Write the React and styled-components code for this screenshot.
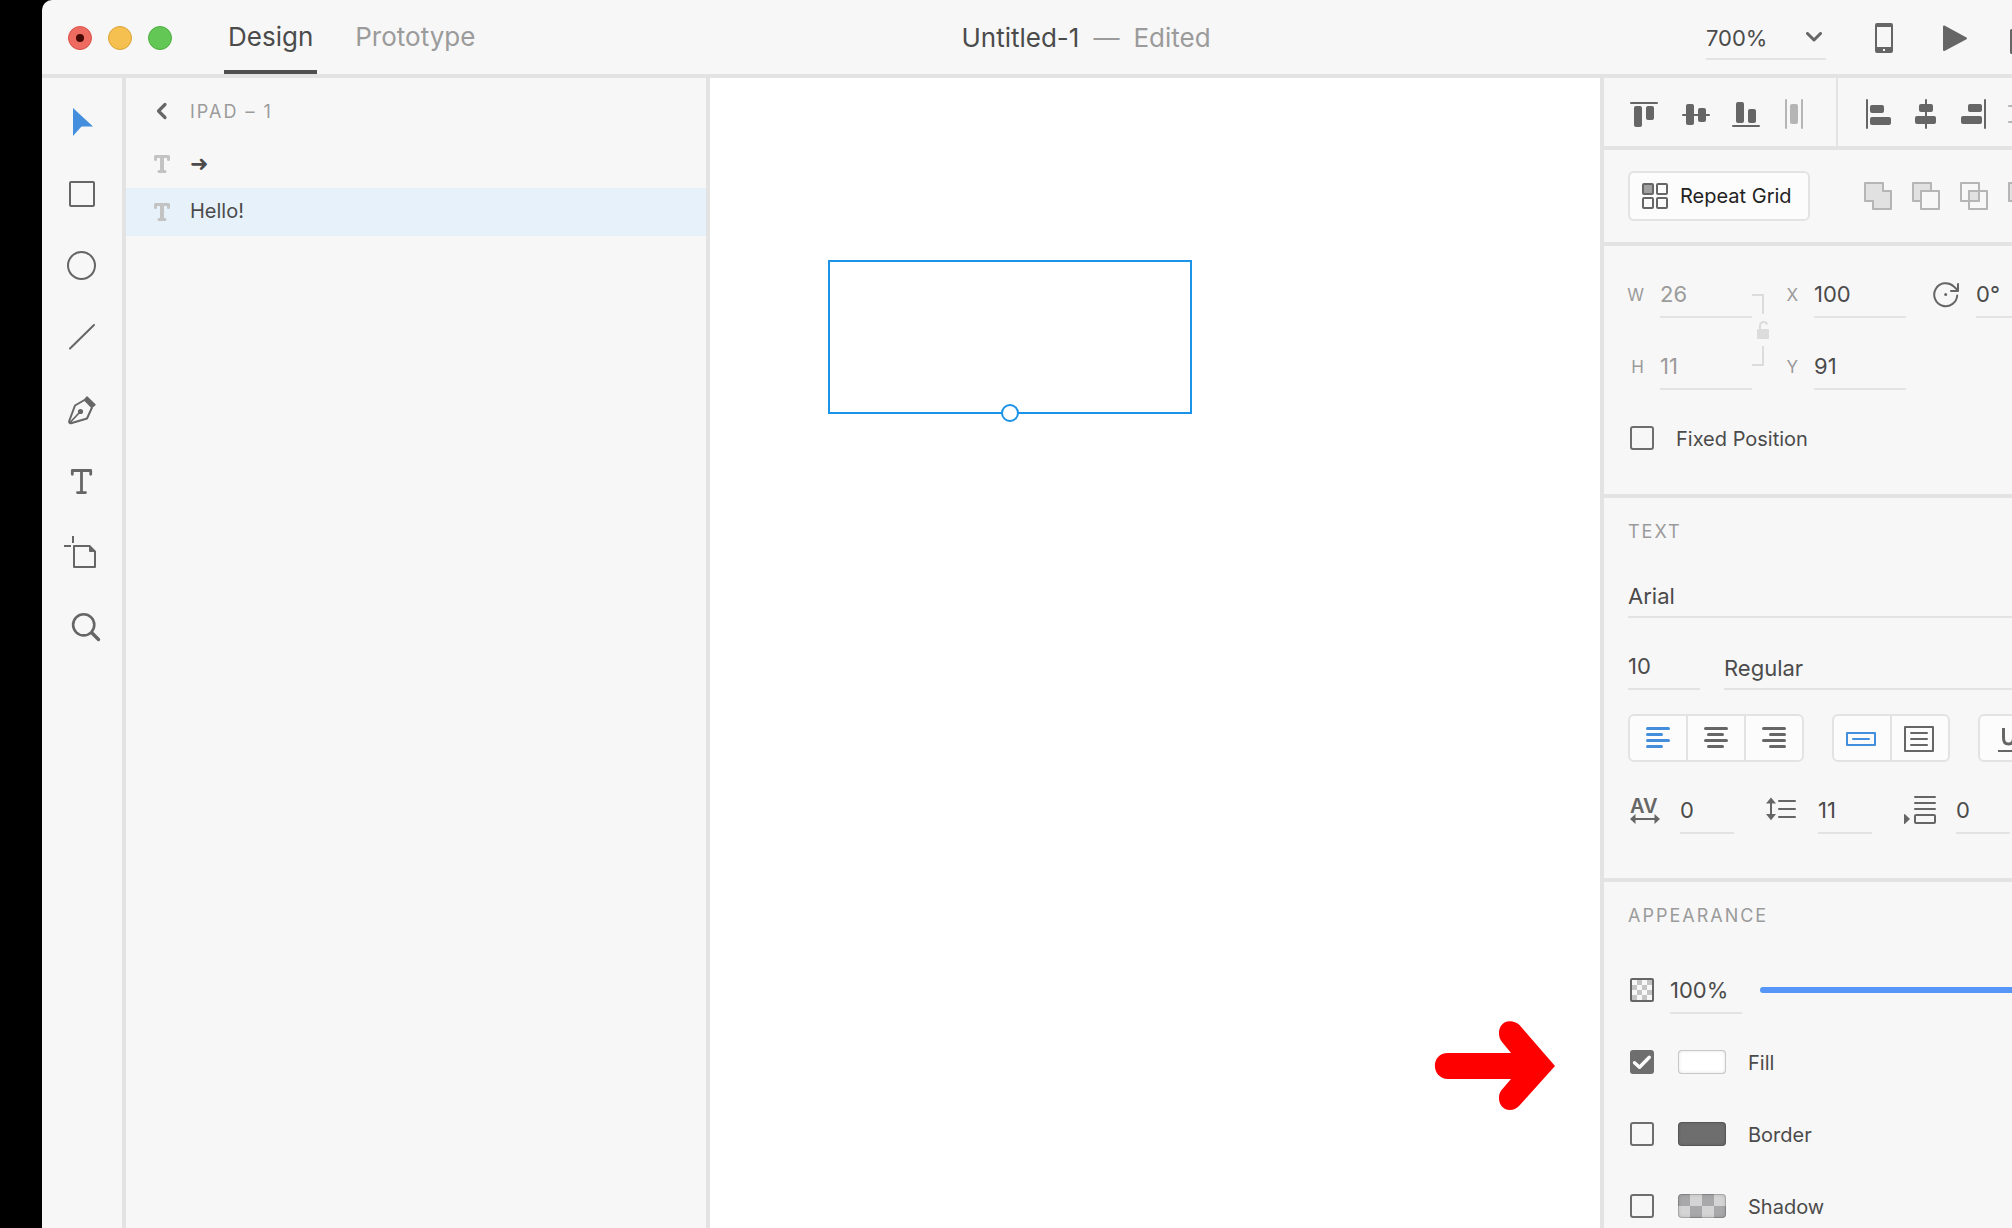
import React, { useState } from "react";
import styled, { createGlobalStyle, css } from "styled-components";

const c = {
  panel: "#f7f7f7",
  line: "#e3e3e3",
  text: "#4b4b4b",
  muted: "#9b9b9b",
  icon: "#666666",
  faint: "#b5b5b5",
  blue: "#448fdd",
  select: "#1a93e8",
};

const GlobalStyle = createGlobalStyle`
  *, *::before, *::after { box-sizing: border-box; }
  body { margin: 0; background: #000; }
  body, button, input, select {
    font-family: Inter, "Liberation Sans", sans-serif;
    color: ${c.text};
  }
  button { margin: 0; padding: 0; border: 0; background: none; cursor: pointer; }
  svg { display: block; flex: none; }
`;

/* ---------- window ---------- */

const Desktop = styled.div`
  height: 100vh;
  overflow: hidden;
  padding-left: 42px;
`;

const Window = styled.div`
  display: flex;
  flex-direction: column;
  width: calc(100% + 118px);
  height: 100%;
  background: ${c.panel};
  border-top-left-radius: 10px;
  overflow: hidden;
`;

const TitleBar = styled.header`
  display: grid;
  grid-template-columns: 1fr auto 1fr;
  flex: none;
  height: 78px;
  padding-top: 2px;
  border-bottom: 4px solid ${c.line};
`;

const TitleSide = styled.div`
  display: flex;
  align-items: center;
  gap: ${(p) => p.$gap}px;
  justify-content: ${(p) => (p.$end ? "flex-end" : "flex-start")};
  padding: ${(p) => (p.$end ? "0 86px 0 0" : "0 0 0 26px")};
`;

const Lights = styled.div`
  display: flex;
  gap: 16px;
`;

const Light = styled.button`
  display: grid;
  place-items: center;
  width: 24px;
  height: 24px;
  border-radius: 50%;
  border: 1px solid ${(p) => p.$edge};
  background: ${(p) => p.$fill};
`;

const UnsavedDot = styled.span`
  width: 8px;
  height: 8px;
  border-radius: 50%;
  background: #460804;
`;

const Tabs = styled.nav`
  display: flex;
  align-self: stretch;
  gap: 34px;
`;

const Tab = styled.button`
  padding: 0 4px;
  font-size: 26px;
  color: ${(p) => (p.$active ? c.text : c.muted)};
  border-bottom: 4px solid ${(p) => (p.$active ? "#505050" : "transparent")};
`;

const DocTitle = styled.h1`
  display: flex;
  align-items: center;
  gap: 14px;
  margin: 0;
  padding-bottom: 2px;
  font-size: 26px;
  font-weight: 400;
  white-space: nowrap;
`;

const Status = styled.span`
  color: ${c.muted};
`;

const IconButton = styled.button`
  display: grid;
  place-items: center;
  width: ${(p) => p.$width || 40}px;
  height: 40px;
`;

const Body = styled.div`
  display: flex;
  flex: 1;
  min-height: 0;
`;

/* ---------- tools and layers ---------- */

const ToolBar = styled.nav`
  display: flex;
  flex-direction: column;
  flex: none;
  width: 84px;
  padding-top: 8px;
  border-right: 4px solid ${c.line};
`;

const Tool = styled.button`
  display: grid;
  place-items: center;
  height: 72px;
`;

const Layers = styled.aside`
  flex: none;
  width: 584px;
  border-right: 4px solid ${c.line};
`;

const LayersHead = styled.div`
  display: flex;
  align-items: center;
  height: 62px;
  padding: 6px 28px 0;
  gap: 20px;
`;

const LayerRow = styled.button`
  display: flex;
  align-items: center;
  gap: 20px;
  width: 100%;
  height: 48px;
  padding: 0 28px;
  font-size: 20px;
  background: ${(p) => (p.$active ? "#e6f1fa" : "transparent")};
`;

const LayerName = styled.span`
  padding-bottom: 2px;
  font-family: Inter, "DejaVu Sans", sans-serif;
  ${(p) =>
    p.$symbol &&
    css`
      font-family: "DejaVu Sans", sans-serif;
      font-size: 22px;
      font-weight: 700;
    `}
`;

const Caption = styled.h2`
  margin: 0;
  font-size: 18px;
  line-height: 20px;
  font-weight: 400;
  letter-spacing: 2px;
  text-transform: uppercase;
  color: ${c.muted};
`;

/* ---------- canvas ---------- */

const Canvas = styled.main`
  position: relative;
  flex: 1;
  min-width: 0;
  background: #fff;
`;

const SelectionBox = styled.div`
  position: absolute;
  left: 118px;
  top: 182px;
  width: 364px;
  height: 154px;
  border: 2px solid ${c.select};
`;

const Handle = styled.span`
  position: absolute;
  left: calc(50% - 9px);
  bottom: -10px;
  width: 18px;
  height: 18px;
  border: 2px solid ${c.select};
  border-radius: 50%;
  background: #fff;
`;

const Pointer = styled.svg`
  position: absolute;
  left: 724px;
  top: 942px;
`;

/* ---------- inspector ---------- */

const Inspector = styled.aside`
  flex: none;
  width: 530px;
  border-left: 4px solid ${c.line};
`;

const Section = styled.section`
  display: flex;
  flex-direction: column;
  padding: 24px 24px ${(p) => p.$bottom || 44}px;
  border-bottom: 4px solid ${c.line};
`;

const ActionStrip = styled.section`
  display: flex;
  align-items: center;
  height: ${(p) => p.$height}px;
  padding-left: ${(p) => p.$inset || 0}px;
  gap: ${(p) => p.$gap || 0}px;
  border-bottom: 4px solid ${c.line};
`;

const IconSet = styled.div`
  display: flex;
  align-items: center;
  align-self: stretch;
  gap: 12px;
  ${(p) =>
    p.$split &&
    css`
      padding: 0 28px 0 24px;
      border-right: 2px solid ${c.line};
      margin-right: 26px;
    `}
`;

const SmallIcon = styled.button`
  width: 36px;
  height: 36px;
`;

const RepeatButton = styled.button`
  display: flex;
  align-items: center;
  gap: 12px;
  width: 182px;
  height: 50px;
  padding-left: 12px;
  border: 2px solid ${c.line};
  border-radius: 6px;
  background: #fcfcfc;
  font-size: 20px;
  color: #222;
  white-space: nowrap;
`;

const Stack = styled.div`
  display: flex;
  flex-direction: column;
  gap: 24px;
  margin-top: ${(p) => p.$top || 0}px;
`;

const Row = styled.div`
  display: flex;
  align-items: ${(p) => p.$align || "center"};
  gap: ${(p) => p.$gap || 0}px;
`;

const Field = styled.label`
  display: flex;
  align-items: center;
  gap: 16px;
  font-size: 17px;
  color: ${c.muted};
`;

const FieldName = styled.span`
  flex: none;
  width: ${(p) => p.$width}px;
  padding-top: 2px;
  display: flex;
  justify-content: flex-end;
`;

const underlined = css`
  margin: 0;
  padding: 2px 0 0;
  border: 0;
  border-radius: 0;
  border-bottom: 2px solid ${c.line};
  background: transparent;
  font-size: 22px;
  outline: none;
`;

const TextInput = styled.input`
  ${underlined}
  flex: none;
  width: ${(p) => p.$width}px;
  height: 48px;
  color: ${(p) => (p.$dim ? c.muted : c.text)};
`;

const Select = styled.select`
  ${underlined}
  appearance: none;
  flex: ${(p) => (p.$width ? "none" : 1)};
  width: ${(p) => (p.$width ? `${p.$width}px` : "100%")};
  height: 44px;
`;

const ZoomBox = styled.div`
  display: grid;
  align-items: center;
  margin-right: 8px;

  & > * { grid-area: 1 / 1; }
  & > svg { justify-self: end; margin: 0 4px 2px 0; pointer-events: none; }
`;

const LinkColumn = styled.div`
  margin-right: 16px;
`;

const RotateField = styled.div`
  align-self: flex-start;
  margin-left: 26px;
`;

const CheckLine = styled.div`
  display: flex;
  align-items: center;
  height: 48px;
  padding-left: 2px;
  font-size: 20px;
`;

const CheckWrap = styled.span`
  display: grid;
  flex: none;
  & > * { grid-area: 1 / 1; }
  & > svg { pointer-events: none; }
`;

const CheckInput = styled.input`
  appearance: none;
  width: 24px;
  height: 24px;
  margin: 0;
  border: 2px solid #6e6e6e;
  border-radius: 3px;
  background: transparent;
  &:checked { background: #6e6e6e; }
`;

const CheckLabel = styled.label`
  margin-left: 22px;
  padding-top: 2px;
`;

const Swatch = styled.button`
  width: 48px;
  height: 24px;
  margin-left: 24px;
  border-radius: 4px;
  background: ${(p) => p.$fill};
  box-shadow: inset 0 0 0 1px rgba(0, 0, 0, 0.16), inset 0 0 4px rgba(0, 0, 0, 0.16);
`;

const Segments = styled.div`
  display: flex;
  height: 48px;
  border: 2px solid ${c.line};
  border-radius: 6px;
  background: #fcfcfc;
`;

const Segment = styled.button`
  display: grid;
  place-items: center;
  width: 56px;
  color: ${(p) => (p.$active ? c.blue : c.icon)};
  & + & {
    width: 58px;
    border-left: 2px solid ${c.line};
  }
`;

const Opacity = styled.div`
  display: flex;
  align-items: center;
  padding-left: 2px;
`;

const OpacityField = styled.label`
  display: flex;
  align-items: center;
  gap: 16px;
`;

const Range = styled.input`
  appearance: none;
  flex: 1;
  height: 20px;
  margin: 0 0 0 18px;
  background: transparent;

  &::-webkit-slider-runnable-track {
    height: 6px;
    border-radius: 3px;
    background: #5596f8;
  }
  &::-webkit-slider-thumb {
    appearance: none;
    width: 24px;
    height: 24px;
    margin-top: -9px;
    border-radius: 50%;
    border: 2px solid #5596f8;
    background: #fff;
  }
`;

/* ---------- drawings ---------- */

const Svg = ({ s = 36, w, h, children, ...rest }) => (
  <svg width={w || s} height={h || s} viewBox={`0 0 ${w || s} ${h || s}`} fill="none" aria-hidden="true" {...rest}>
    {children}
  </svg>
);

const Bars = ({ items, color = c.icon }) => (
  <Svg fill={color}>
    {items.map(([x, y, w, h]) => (
      <rect key={`${x}-${y}`} x={x} y={y} width={w} height={h} rx={Math.min(w, h) > 3 ? 2 : 1} />
    ))}
  </Svg>
);

const verticalAlign = [
  ["Align top", [[2, 8, 28, 2], [6, 12, 8, 21], [18, 12, 8, 14]]],
  ["Align middle", [[6, 20, 28, 2], [10, 10, 8, 21], [22, 14, 8, 14]]],
  ["Align bottom", [[8, 31, 28, 2], [12, 8, 8, 21], [24, 15, 8, 14]]],
  ["Distribute horizontally", [[13, 5, 2, 30], [29, 5, 2, 30], [18, 10, 8, 20]], c.faint],
];

const horizontalAlign = [
  ["Align left", [[2, 5, 2, 30], [6, 11, 14, 8], [6, 23, 21, 8]]],
  ["Align center", [[13, 5, 2, 30], [7, 10, 14, 8], [3, 22, 21, 8]]],
  ["Align right", [[24, 5, 2, 30], [8, 10, 14, 8], [1, 22, 21, 8]]],
  ["Distribute vertically", [[0, 11, 30, 2], [0, 27, 30, 2], [5, 16, 20, 8]], c.faint],
];

const BoolIcon = ({ kind }) => (
  <Svg stroke={c.faint} strokeWidth="2" strokeLinejoin="round">
    {kind === "Add" && <path d="M1 5h18v8h8v18H9v-8H1z" fill="#e1e1e1" />}
    {kind === "Subtract" && (
      <>
        <path d="M1 5h18v8H9v10H1z" fill="#e1e1e1" />
        <rect x="9" y="13" width="18" height="18" />
      </>
    )}
    {kind === "Intersect" && (
      <>
        <rect x="9" y="13" width="10" height="10" fill="#e1e1e1" />
        <rect x="1" y="5" width="18" height="18" />
        <rect x="9" y="13" width="18" height="18" />
      </>
    )}
    {kind === "Exclude" && (
      <>
        <path d="M1 5h18v8h8v18H9v-8H1z" fill="#e1e1e1" />
        <rect x="9" y="13" width="10" height="10" fill={c.panel} />
      </>
    )}
  </Svg>
);

const tools = [
  ["Select", <path d="M11 6 31 24.600H20.500Q19.500 24.600 18.800 25.300L11 34z" fill={c.blue} />],
  ["Rectangle", <rect x="8" y="8" width="24" height="24" rx="1" />],
  ["Ellipse", <circle cx="19.500" cy="19.500" r="13.500" />],
  ["Line", <path d="M8 30.500 32 7" strokeLinecap="round" />],
  [
    "Pen",
    <>
      <path d="M22.500 10 13 15.500 7.200 31Q7 33.500 9 33.200L25 28.500 30 17.500" strokeLinejoin="round" />
      <path d="M8 32.500 18 22" strokeWidth="1.800" />
      <circle cx="18.500" cy="21.500" r="2.600" fill={c.icon} stroke="none" />
      <path d="M25 7 33 14.800 29.800 17.500 22.500 10z" fill={c.icon} strokeWidth="1.500" strokeLinejoin="round" />
    </>,
  ],
  [
    "Text",
    <path d="M10.300 12.300V8.500H28.700v3.800M19.500 8.500v22M15.500 30.600h8" strokeWidth="2.800" strokeLinecap="round" strokeLinejoin="round" />,
  ],
  [
    "Artboard",
    <>
      <path d="M12 12h15.500L33 17.500V33H12z" strokeLinejoin="round" />
      <path d="M27 11.500v5.500q0 1 1 1h5.500z" fill={c.icon} stroke="none" />
      <path d="M11 2v7M2 12h7" />
    </>,
  ],
  [
    "Zoom",
    <>
      <circle cx="21.700" cy="18.800" r="10.600" strokeWidth="2.600" />
      <path d="M30 27l6.500 6.500" strokeWidth="3.400" strokeLinecap="round" />
    </>,
  ],
];

const TextGlyph = () => (
  <Svg w={16} h={18} stroke="#c3c3c3" strokeWidth="3" strokeLinecap="round" strokeLinejoin="round">
    <path d="M1.500 4.500v-3h13v3" />
    <path d="M8 2v14" strokeWidth="4" strokeLinecap="butt" />
    <path d="M5 16.500h6" />
  </Svg>
);

const textAligns = [
  ["Left", [[6, 7, 24, 3], [6, 13, 17, 3], [6, 19, 24, 3], [6, 25, 17, 3]]],
  ["Center", [[6, 7, 24, 3], [9, 13, 17, 3], [6, 19, 24, 3], [9, 25, 17, 3]]],
  ["Right", [[6, 7, 24, 3], [13, 13, 17, 3], [6, 19, 24, 3], [13, 25, 17, 3]]],
];

const TextAlignIcon = ({ items }) => (
  <Svg fill="currentColor">
    {items.map(([x, y, w, h]) => (
      <rect key={y} x={x} y={y} width={w} height={h} rx="1.500" />
    ))}
  </Svg>
);

const spacingIcons = {
  tracking: (
    <Svg fill={c.icon}>
      <text x="2" y="21" fontSize="20" fontWeight="600" fontFamily="Inter, sans-serif">AV</text>
      <path d="M2 27 7.500 22v4h19v-4L32 27l-5.500 5v-4h-19v4z" />
    </Svg>
  ),
  leading: (
    <Svg fill={c.icon}>
      <path d="M5 5.500 10 11.500H6v10.500h4L5 28.200 0 22h4V11.500H0z" />
      <rect x="12" y="8" width="18" height="2" rx="1" />
      <rect x="12" y="16" width="18" height="2" rx="1" />
      <rect x="12" y="24" width="18" height="2" rx="1" />
    </Svg>
  ),
  paragraph: (
    <Svg fill={c.icon}>
      <path d="M0 22.500q0-1 1-.2L6 27l-5 4.700q-1 .8-1-.2z" />
      <rect x="10" y="4" width="22" height="2" rx="1" />
      <rect x="10" y="10" width="22" height="2" rx="1" />
      <rect x="10" y="16" width="22" height="2" rx="1" />
      <rect x="11" y="23" width="20" height="8" rx="1" fill="none" stroke={c.icon} strokeWidth="2" />
    </Svg>
  ),
};

/* ---------- pieces ---------- */

const NumberField = ({ id, name, nameWidth, value, dim, width = 92 }) => (
  <Field htmlFor={id}>
    <FieldName $width={nameWidth}>{name}</FieldName>
    <TextInput id={id} $width={width} $dim={dim} defaultValue={value} />
  </Field>
);

const CheckBox = ({ id, initial = false }) => {
  const [on, setOn] = useState(initial);
  return (
    <CheckWrap>
      <CheckInput id={id} type="checkbox" checked={on} onChange={() => setOn(!on)} />
      {on && (
        <Svg s={24}>
          <path d="M4.500 12.700 9.500 17.200 19.300 7.200" stroke="#fcfcfc" strokeWidth="3.400" strokeLinecap="round" strokeLinejoin="round" />
        </Svg>
      )}
    </CheckWrap>
  );
};

const checker = "repeating-conic-gradient(#d4d4d4 0 25%, #a8a8aa 0 50%) 0 0 / 24px 24px";

const paints = [
  ["Fill", "#fff", true],
  ["Border", "#6e6e6e", false],
  ["Shadow", checker, false],
];

export default function App() {
  return (
    <Desktop>
      <GlobalStyle />
      <Window>
        <TitleBar>
          <TitleSide $gap={52}>
            <Lights>
              <Light aria-label="Close" $fill="#ed6b60" $edge="#dd5147"><UnsavedDot /></Light>
              <Light aria-label="Minimize" $fill="#f5c04f" $edge="#dba43b" />
              <Light aria-label="Full screen" $fill="#62c755" $edge="#4fae41" />
            </Lights>
            <Tabs>
              <Tab $active>Design</Tab>
              <Tab>Prototype</Tab>
            </Tabs>
          </TitleSide>
          <DocTitle>
            <span>Untitled-1</span>
            <Status>—</Status>
            <Status>Edited</Status>
          </DocTitle>
          <TitleSide $end $gap={30}>
            <ZoomBox>
              <Select aria-label="Zoom level" $width={120} defaultValue="700%">
                <option>700%</option>
              </Select>
              <Svg w={16} h={10} stroke={c.icon} strokeWidth="3" strokeLinecap="round" strokeLinejoin="round">
                <path d="M1.500 1.500 8 8l6.500-6.500" />
              </Svg>
            </ZoomBox>
            <IconButton aria-label="Device preview">
              <Svg s={40}>
                <path fillRule="evenodd" fill={c.icon} d="M13 5h14a2 2 0 0 1 2 2v26a2 2 0 0 1-2 2H13a2 2 0 0 1-2-2V7a2 2 0 0 1 2-2zM13 9v20h14V9zM19 31v2h2v-2z" />
              </Svg>
            </IconButton>
            <IconButton aria-label="Play">
              <Svg s={40}>
                <path d="M10 8.500v23.500L32 20.300z" fill={c.icon} stroke={c.icon} strokeWidth="2" strokeLinejoin="round" />
              </Svg>
            </IconButton>
            <IconButton aria-label="Share">
              <Svg s={40} stroke={c.icon} strokeWidth="3" strokeLinejoin="round" strokeLinecap="round">
                <path d="M13 12.500H7.500v22h23v-22H25M19 26V4M13 9l6-6 6 6" />
              </Svg>
            </IconButton>
          </TitleSide>
        </TitleBar>

        <Body>
          <ToolBar>
            {tools.map(([name, drawing]) => (
              <Tool key={name} aria-label={name}>
                <Svg s={40} stroke={name === "Select" ? "none" : c.icon} strokeWidth="2">{drawing}</Svg>
              </Tool>
            ))}
          </ToolBar>

          <Layers>
            <LayersHead>
              <IconButton aria-label="Back" $width={16}>
                <Svg w={12} h={20} stroke={c.icon} strokeWidth="3.200" strokeLinecap="round" strokeLinejoin="round">
                  <path d="M9 2.500 2.500 9 9 15.500" />
                </Svg>
              </IconButton>
              <Caption>iPad – 1</Caption>
            </LayersHead>
            <LayerRow><TextGlyph /><LayerName $symbol>➜</LayerName></LayerRow>
            <LayerRow $active><TextGlyph /><LayerName>Hello!</LayerName></LayerRow>
          </Layers>

          <Canvas>
            <SelectionBox><Handle /></SelectionBox>
            <Pointer width="122" height="92" viewBox="0 0 122 92" role="img" aria-label="➜">
              <path
                fill="#ff0000"
                d="M14 33H77L68 22C62 15 65 1 76 1.300Q81 1.300 85.500 5L121 46 85.500 85.500Q81 90 76 90C65 90 62 76 68 69.500L77 59H14C-3.500 58-3.500 33 14 33z"
              />
            </Pointer>
          </Canvas>

          <Inspector>
            <ActionStrip $height={72}>
              <IconSet $split>
                {verticalAlign.map(([name, items, color]) => (
                  <SmallIcon key={name} aria-label={name}><Bars items={items} color={color} /></SmallIcon>
                ))}
              </IconSet>
              <IconSet>
                {horizontalAlign.map(([name, items, color]) => (
                  <SmallIcon key={name} aria-label={name}><Bars items={items} color={color} /></SmallIcon>
                ))}
              </IconSet>
            </ActionStrip>

            <ActionStrip $height={96} $inset={24} $gap={54}>
              <RepeatButton>
                <Svg s={26} stroke={c.icon} strokeWidth="2">
                  <rect x="1" y="1" width="10" height="10" rx="1" fill="#a0a0a0" />
                  <rect x="15" y="1" width="10" height="10" rx="1" />
                  <rect x="1" y="15" width="10" height="10" rx="1" />
                  <rect x="15" y="15" width="10" height="10" rx="1" />
                </Svg>
                Repeat Grid
              </RepeatButton>
              <IconSet>
                {["Add", "Subtract", "Intersect", "Exclude"].map((kind) => (
                  <SmallIcon key={kind} aria-label={kind}><BoolIcon kind={kind} /></SmallIcon>
                ))}
              </IconSet>
            </ActionStrip>

            <Section $bottom={32}>
              <Row>
                <Stack>
                  <NumberField id="width" name="W" nameWidth={16} value="26" dim />
                  <NumberField id="height" name="H" nameWidth={16} value="11" dim />
                </Stack>
                <LinkColumn>
                  <Svg w={18} h={120}>
                    <path d="M0 25h11v19M11 76v19H0" stroke="#dcdcdc" strokeWidth="2" />
                    <path d="M8 60v-4q0-4 4-4 2.500 0 3 2.500" stroke="#dcdcdc" strokeWidth="2" />
                    <rect x="5" y="59" width="12" height="10" rx="1" fill="#dcdcdc" />
                  </Svg>
                </LinkColumn>
                <Stack>
                  <NumberField id="pos-x" name="X" nameWidth={12} value="100" />
                  <NumberField id="pos-y" name="Y" nameWidth={12} value="91" />
                </Stack>
                <RotateField>
                  <Field htmlFor="rotation">
                    <Svg s={28} role="img" aria-label="Rotation" aria-hidden="false">
                      <path d="M25.200 15.500A11.500 11.500 0 1 1 21.500 6.200L24.500 9" stroke={c.icon} strokeWidth="2" strokeLinecap="round" />
                      <path d="M26 4v7h-7" stroke={c.icon} strokeWidth="2" strokeLinecap="round" strokeLinejoin="round" />
                      <circle cx="13.700" cy="14.500" r="1.500" fill={c.icon} />
                    </Svg>
                    <TextInput id="rotation" $width={92} defaultValue="0°" />
                  </Field>
                </RotateField>
              </Row>
              <Stack $top={24}>
                <CheckLine>
                  <CheckBox id="fixed" />
                  <CheckLabel htmlFor="fixed">Fixed Position</CheckLabel>
                </CheckLine>
              </Stack>
            </Section>

            <Section>
              <Caption>Text</Caption>
              <Stack $top={32}>
                <Row>
                  <Select aria-label="Font family" defaultValue="Arial"><option>Arial</option></Select>
                </Row>
                <Row $gap={24} $align="flex-end">
                  <TextInput aria-label="Font size" $width={72} defaultValue="10" />
                  <Select aria-label="Font weight" defaultValue="Regular"><option>Regular</option></Select>
                </Row>
                <Row $gap={28}>
                  <Segments>
                    {textAligns.map(([name, items], i) => (
                      <Segment key={name} aria-label={`${name} align text`} $active={i === 0}>
                        <TextAlignIcon items={items} />
                      </Segment>
                    ))}
                  </Segments>
                  <Segments>
                    <Segment aria-label="Point text" $active>
                      <Svg stroke="currentColor" strokeWidth="2" strokeLinejoin="round" strokeLinecap="round">
                        <path d="M3 13h28v12H3zM9 19h16" />
                      </Svg>
                    </Segment>
                    <Segment aria-label="Area text">
                      <Svg stroke="currentColor" strokeWidth="2" strokeLinejoin="round" strokeLinecap="round">
                        <path d="M3 7h28v24H3zM9 13h16M9 19h16M9 25h16" />
                      </Svg>
                    </Segment>
                  </Segments>
                  <Segments>
                    <Segment aria-label="Underline">
                      <Svg stroke="currentColor" strokeWidth="3">
                        <path d="M13.500 8v10q0 6 5 6t5-6V8" />
                        <path d="M8 31h22" strokeWidth="2" />
                      </Svg>
                    </Segment>
                  </Segments>
                </Row>
                <Row $gap={32}>
                  <Field>{spacingIcons.tracking}<TextInput aria-label="Character spacing" $width={54} defaultValue="0" /></Field>
                  <Field>{spacingIcons.leading}<TextInput aria-label="Line spacing" $width={54} defaultValue="11" /></Field>
                  <Field>{spacingIcons.paragraph}<TextInput aria-label="Paragraph spacing" $width={54} defaultValue="0" /></Field>
                </Row>
              </Stack>
            </Section>

            <Section>
              <Caption>Appearance</Caption>
              <Stack $top={40}>
                <Opacity>
                  <OpacityField>
                    <Svg s={24}>
                      <path d="M7 2h5v5H7zM17 2h5v5h-5zM2 7h5v5H2zM12 7h5v5h-5zM7 12h5v5H7zM17 12h5v5h-5zM2 17h5v5H2zM12 17h5v5h-5z" fill="#c4c4c4" />
                      <rect x="1" y="1" width="22" height="22" rx="1" stroke={c.icon} strokeWidth="2" />
                    </Svg>
                    <TextInput aria-label="Opacity" $width={72} defaultValue="100%" />
                  </OpacityField>
                  <Range type="range" aria-label="Opacity slider" min="0" max="100" defaultValue="100" />
                </Opacity>
                {paints.map(([name, fill, on]) => (
                  <CheckLine key={name}>
                    <CheckBox id={name} initial={on} />
                    <Swatch aria-label={`${name} color`} $fill={fill} />
                    <CheckLabel htmlFor={name}>{name}</CheckLabel>
                  </CheckLine>
                ))}
              </Stack>
            </Section>
          </Inspector>
        </Body>
      </Window>
    </Desktop>
  );
}
